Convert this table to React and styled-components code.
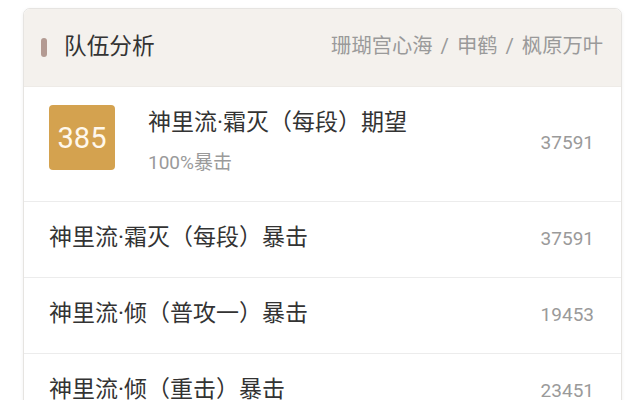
import styled, { createGlobalStyle } from "styled-components";

const GlobalStyle = createGlobalStyle`
  html, body {
    margin: 0;
    padding: 0;
    background: #ffffff;
  }
  body {
    font-family: "Roboto", "Noto Sans CJK SC", sans-serif;
  }
`;

const Page = styled.div`
  padding: 8px 22px 0 23px;
`;

const Card = styled.div`
  border: 1px solid #e6e4e1;
  border-radius: 7px;
  overflow: hidden;
  box-shadow: 0 1px 4px rgba(0, 0, 0, 0.06);
  background: #ffffff;
`;

const Header = styled.div`
  display: flex;
  align-items: center;
  justify-content: space-between;
  height: 77px;
  padding: 0 18px 0 17px;
  background: #f4f1ed;
  border-bottom: 1px solid #eeebe7;
`;

const TitleWrap = styled.div`
  display: flex;
  align-items: center;
  gap: 17px;
`;

const Marker = styled.span`
  width: 6px;
  height: 19px;
  border-radius: 3px;
  background: #b39a92;
`;

const Title = styled.h2`
  margin: 0 0 2px;
  font-size: 22.7px;
  font-weight: 400;
  line-height: 1.3;
  color: #333333;
`;

const Team = styled.div`
  font-size: 20.3px;
  line-height: 1.3;
  margin-bottom: 2px;
  color: #9a9a9a;
`;

const Slash = styled.span`
  margin: 0 8px;
`;

const Row = styled.div`
  display: flex;
  align-items: ${(p) => (p.$tall ? "flex-start" : "center")};
  justify-content: space-between;
  height: ${(p) => (p.$tall ? "96px" : "75px")};
  padding: ${(p) => (p.$tall ? "18px 27px 0 25px" : "0 27px 0 25px")};
  border-bottom: 1px solid #ececec;
`;

const Left = styled.div`
  display: flex;
  align-items: flex-start;
  gap: 33px;
`;

const Badge = styled.div`
  display: flex;
  align-items: center;
  justify-content: center;
  width: 66px;
  height: 65px;
  border-radius: 4px;
  background: #d4a24f;
  color: #fff8ec;
  font-size: 29px;
`;

const Texts = styled.div`
  display: flex;
  flex-direction: column;
  gap: 10px;
  padding-top: 1px;
`;

const Name = styled.div`
  font-size: 23px;
  line-height: 33px;
  margin-top: ${(p) => (p.$flat ? "-4px" : "0")};
  color: #333333;
`;

const Sub = styled.div`
  font-size: 19px;
  line-height: 27px;
  color: #9a9a9a;
`;

const Value = styled.div`
  align-self: center;
  font-size: 19px;
  line-height: 27px;
  margin-top: ${(p) => (p.$tall ? "-21px" : "-2px")};
  color: #9a9a9a;
`;

const rows = [
  { name: "神里流·霜灭（每段）暴击", value: 37591 },
  { name: "神里流·倾（普攻一）暴击", value: 19453 },
  { name: "神里流·倾（重击）暴击", value: 23451 },
];

export default function App() {
  return (
    <>
      <GlobalStyle />
      <Page>
        <Card>
          <Header>
            <TitleWrap>
              <Marker />
              <Title>队伍分析</Title>
            </TitleWrap>
            <Team>
              珊瑚宫心海<Slash>/</Slash>申鹤<Slash>/</Slash>枫原万叶
            </Team>
          </Header>
          <Row $tall>
            <Left>
              <Badge>385</Badge>
              <Texts>
                <Name>神里流·霜灭（每段）期望</Name>
                <Sub>100%暴击</Sub>
              </Texts>
            </Left>
            <Value $tall>37591</Value>
          </Row>
          {rows.map((r) => (
            <Row key={r.name}>
              <Name $flat>{r.name}</Name>
              <Value>{r.value}</Value>
            </Row>
          ))}
        </Card>
      </Page>
    </>
  );
}
